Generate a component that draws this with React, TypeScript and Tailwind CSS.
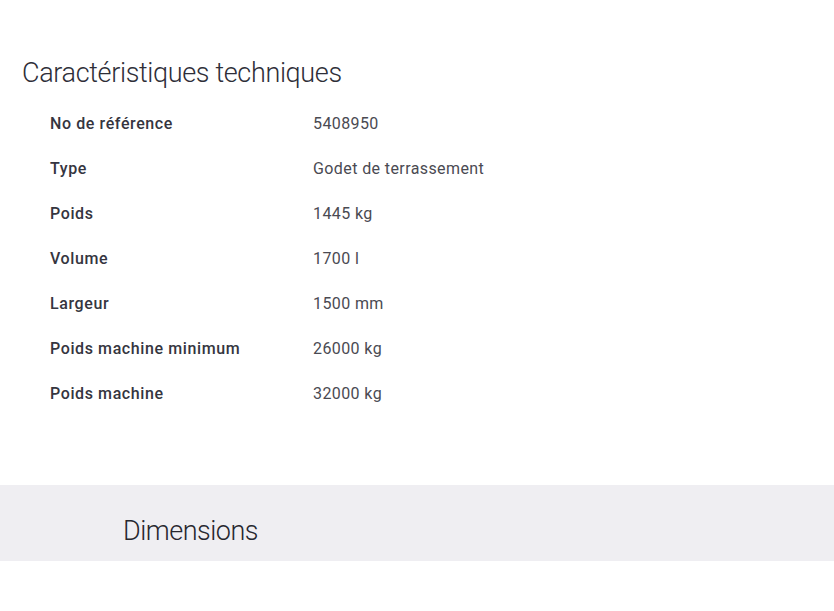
import React from "react";

const rows: [string, string][] = [
  ["No de référence", "5408950"],
  ["Type", "Godet de terrassement"],
  ["Poids", "1445 kg"],
  ["Volume", "1700 l"],
  ["Largeur", "1500 mm"],
  ["Poids machine minimum", "26000 kg"],
  ["Poids machine", "32000 kg"],
];

export default function App() {
  return (
    <div className="min-h-[611px] w-[834px] bg-white" style={{ fontFamily: "Roboto, 'Open Sans', sans-serif" }}>
      <section className="pl-[22px] pt-[57px]">
        <h2 className="text-[27px] leading-[32px] font-light tracking-[-0.35px] text-[#2e2e38]">
          Caractéristiques techniques
        </h2>
        <dl className="mt-[25px] pl-[28px]">
          {rows.map(([k, v]) => (
            <div key={k} className="flex h-[45px] items-start">
              <dt className="w-[263px] text-[16px] leading-[20px] font-medium text-[#353540] tracking-[0.6px]">{k}</dt>
              <dd className="text-[16px] leading-[20px] font-normal text-[#4a4a52] tracking-[0.4px]">{v}</dd>
            </div>
          ))}
        </dl>
      </section>
      <section className="mt-[56px] flex h-[76px] items-center bg-[#efeef2] pl-[123px] pt-[16px]">
        <h2 className="text-[27px] leading-[32px] font-light tracking-[-0.5px] text-[#26262e]">Dimensions</h2>
      </section>
    </div>
  );
}
